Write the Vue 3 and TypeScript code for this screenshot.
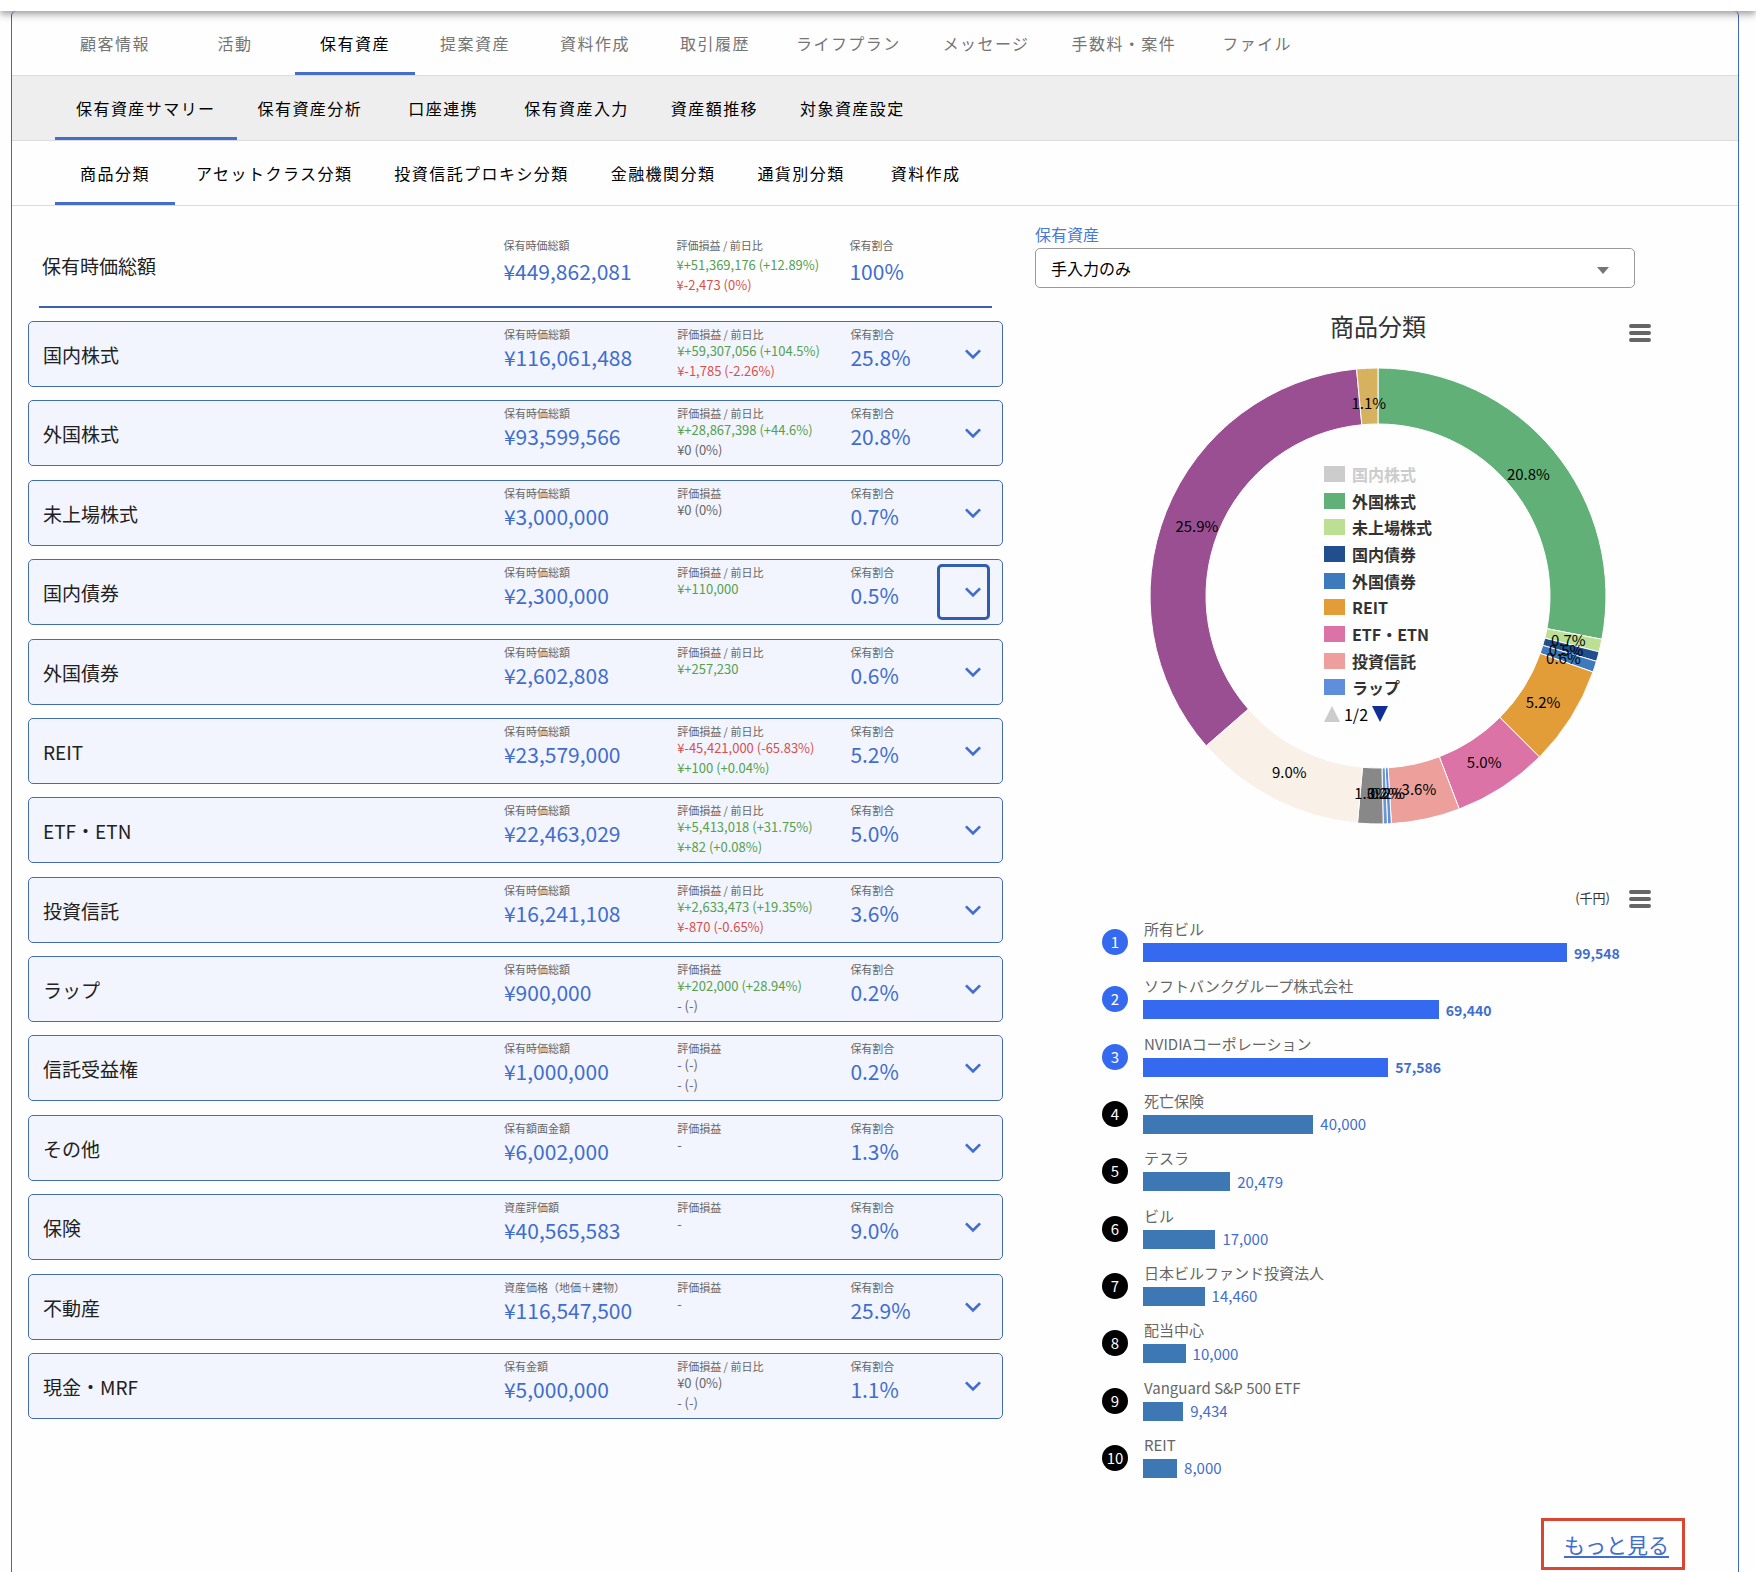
<script setup lang="ts">
import { computed, ref } from 'vue'

type Tone = 'up' | 'down' | 'flat'
interface Gain { text: string; tone: Tone }
interface Asset {
  name: string
  amountLabel: string
  amount: string
  gainLabel: string
  gains: Gain[]
  ratio: string
}
interface Slice { label: string; value: number; percent: string; color: string }

const up = (text: string): Gain => ({ text, tone: 'up' })
const down = (text: string): Gain => ({ text, tone: 'down' })
const flat = (text: string): Gain => ({ text, tone: 'flat' })

const BOTH = '評価損益 / 前日比'
const ONE = '評価損益'
const TOTAL = '保有時価総額'

const mainTabs = ['顧客情報', '活動', '保有資産', '提案資産', '資料作成', '取引履歴', 'ライフプラン', 'メッセージ', '手数料・案件', 'ファイル']
const subTabs = ['保有資産サマリー', '保有資産分析', '口座連携', '保有資産入力', '資産額推移', '対象資産設定']
const viewTabs = ['商品分類', 'アセットクラス分類', '投資信託プロキシ分類', '金融機関分類', '通貨別分類', '資料作成']

const mainTab = ref('保有資産')
const subTab = ref('保有資産サマリー')
const viewTab = ref('商品分類')
const focused = ref('国内債券')
const source = ref('手入力のみ')

const assets: Asset[] = [
  { name: '国内株式', amountLabel: TOTAL, amount: '¥116,061,488', gainLabel: BOTH, gains: [up('¥+59,307,056 (+104.5%)'), down('¥-1,785 (-2.26%)')], ratio: '25.8%' },
  { name: '外国株式', amountLabel: TOTAL, amount: '¥93,599,566', gainLabel: BOTH, gains: [up('¥+28,867,398 (+44.6%)'), flat('¥0 (0%)')], ratio: '20.8%' },
  { name: '未上場株式', amountLabel: TOTAL, amount: '¥3,000,000', gainLabel: ONE, gains: [flat('¥0 (0%)')], ratio: '0.7%' },
  { name: '国内債券', amountLabel: TOTAL, amount: '¥2,300,000', gainLabel: BOTH, gains: [up('¥+110,000')], ratio: '0.5%' },
  { name: '外国債券', amountLabel: TOTAL, amount: '¥2,602,808', gainLabel: BOTH, gains: [up('¥+257,230')], ratio: '0.6%' },
  { name: 'REIT', amountLabel: TOTAL, amount: '¥23,579,000', gainLabel: BOTH, gains: [down('¥-45,421,000 (-65.83%)'), up('¥+100 (+0.04%)')], ratio: '5.2%' },
  { name: 'ETF・ETN', amountLabel: TOTAL, amount: '¥22,463,029', gainLabel: BOTH, gains: [up('¥+5,413,018 (+31.75%)'), up('¥+82 (+0.08%)')], ratio: '5.0%' },
  { name: '投資信託', amountLabel: TOTAL, amount: '¥16,241,108', gainLabel: BOTH, gains: [up('¥+2,633,473 (+19.35%)'), down('¥-870 (-0.65%)')], ratio: '3.6%' },
  { name: 'ラップ', amountLabel: TOTAL, amount: '¥900,000', gainLabel: ONE, gains: [up('¥+202,000 (+28.94%)'), flat('- (-)')], ratio: '0.2%' },
  { name: '信託受益権', amountLabel: TOTAL, amount: '¥1,000,000', gainLabel: ONE, gains: [flat('- (-)'), flat('- (-)')], ratio: '0.2%' },
  { name: 'その他', amountLabel: '保有額面金額', amount: '¥6,002,000', gainLabel: ONE, gains: [flat('-')], ratio: '1.3%' },
  { name: '保険', amountLabel: '資産評価額', amount: '¥40,565,583', gainLabel: ONE, gains: [flat('-')], ratio: '9.0%' },
  { name: '不動産', amountLabel: '資産価格（地価＋建物）', amount: '¥116,547,500', gainLabel: ONE, gains: [flat('-')], ratio: '25.9%' },
  { name: '現金・MRF', amountLabel: '保有金額', amount: '¥5,000,000', gainLabel: BOTH, gains: [flat('¥0 (0%)'), flat('- (-)')], ratio: '1.1%' },
]

const slices: Slice[] = [
  { label: '外国株式', value: 93599566, percent: '20.8%', color: '#61b077' },
  { label: '未上場株式', value: 3000000, percent: '0.7%', color: '#bcdf93' },
  { label: '国内債券', value: 2300000, percent: '0.5%', color: '#214e8c' },
  { label: '外国債券', value: 2602808, percent: '0.6%', color: '#3c7abd' },
  { label: 'REIT', value: 23579000, percent: '5.2%', color: '#e39d38' },
  { label: 'ETF・ETN', value: 22463029, percent: '5.0%', color: '#db73a6' },
  { label: '投資信託', value: 16241108, percent: '3.6%', color: '#ec9f9b' },
  { label: 'ラップ', value: 900000, percent: '0.2%', color: '#5f8fdb' },
  { label: '信託受益権', value: 1000000, percent: '0.2%', color: '#6f96cf' },
  { label: 'その他', value: 6002000, percent: '1.3%', color: '#888888' },
  { label: '保険', value: 40565583, percent: '9.0%', color: '#f9f0e7' },
  { label: '不動産', value: 116547500, percent: '25.9%', color: '#994f91' },
  { label: '現金・MRF', value: 5000000, percent: '1.1%', color: '#d6b25f' },
]

const legend = [{ label: '国内株式', color: '#cccccc', off: true }, ...slices.slice(0, 8).map(s => ({ label: s.label, color: s.color, off: false }))]

const OUTER = 228
const INNER = 172
const LABEL = 195

const arcs = computed(() => {
  const sum = slices.reduce((t, s) => t + s.value, 0)
  const at = (r: number, a: number) => [Math.sin(a) * r, -Math.cos(a) * r].map(n => n.toFixed(2)).join(' ')
  let angle = 0
  return slices.map(s => {
    const start = angle
    const end = (angle += (s.value / sum) * Math.PI * 2)
    const large = end - start > Math.PI ? 1 : 0
    const mid = (start + end) / 2
    return {
      ...s,
      path: `M${at(OUTER, start)}A${OUTER} ${OUTER} 0 ${large} 1 ${at(OUTER, end)}L${at(INNER, end)}A${INNER} ${INNER} 0 ${large} 0 ${at(INNER, start)}Z`,
      x: Math.sin(mid) * LABEL,
      y: -Math.cos(mid) * LABEL + 8,
    }
  })
})

const ranking = [
  { name: '所有ビル', value: 99548 },
  { name: 'ソフトバンクグループ株式会社', value: 69440 },
  { name: 'NVIDIAコーポレーション', value: 57586 },
  { name: '死亡保険', value: 40000 },
  { name: 'テスラ', value: 20479 },
  { name: 'ビル', value: 17000 },
  { name: '日本ビルファンド投資法人', value: 14460 },
  { name: '配当中心', value: 10000 },
  { name: 'Vanguard S&P 500 ETF', value: 9434 },
  { name: 'REIT', value: 8000 },
]
const barWidth = (value: number) => `${((value / 99548) * 100).toFixed(2)}%`
</script>

<template>
  <div class="page">
    <header class="appbar"></header>
    <main class="card">
      <nav class="tabs tabs-main">
        <button v-for="t in mainTabs" :key="t" type="button" :class="{ active: t === mainTab }" @click="mainTab = t">{{ t }}</button>
      </nav>
      <nav class="tabs tabs-sub">
        <button v-for="t in subTabs" :key="t" type="button" :class="{ active: t === subTab }" @click="subTab = t">{{ t }}</button>
      </nav>
      <nav class="tabs">
        <button v-for="t in viewTabs" :key="t" type="button" :class="{ active: t === viewTab }" @click="viewTab = t">{{ t }}</button>
      </nav>

      <div class="content">
        <section class="holdings">
          <div class="cols total">
            <h2 class="name">保有時価総額</h2>
            <div class="cell">
              <span class="label">保有時価総額</span>
              <span class="value">¥449,862,081</span>
            </div>
            <div class="cell">
              <span class="label">評価損益 / 前日比</span>
              <span class="gain up">¥+51,369,176 (+12.89%)</span>
              <span class="gain down">¥-2,473 (0%)</span>
            </div>
            <div class="cell">
              <span class="label">保有割合</span>
              <span class="value">100%</span>
            </div>
          </div>

          <ul class="assets">
            <li v-for="a in assets" :key="a.name" class="cols asset">
              <h3 class="name">{{ a.name }}</h3>
              <div class="cell">
                <span class="label">{{ a.amountLabel }}</span>
                <span class="value">{{ a.amount }}</span>
              </div>
              <div class="cell">
                <span class="label">{{ a.gainLabel }}</span>
                <span v-for="(g, i) in a.gains" :key="i" class="gain" :class="g.tone">{{ g.text }}</span>
              </div>
              <div class="cell">
                <span class="label">保有割合</span>
                <span class="value">{{ a.ratio }}</span>
              </div>
              <button type="button" class="expand" :class="{ focused: a.name === focused }" :aria-label="a.name" @click="focused = a.name">
                <svg viewBox="0 0 24 24" width="32" height="32"><path fill="currentColor" d="M7.41 8.58 12 13.17l4.59-4.59L18 10l-6 6-6-6z" /></svg>
              </button>
            </li>
          </ul>
        </section>

        <section class="charts">
          <label class="source-label" for="source">保有資産</label>
          <div class="source">
            <select id="source" v-model="source">
              <option>手入力のみ</option>
            </select>
            <svg class="caret" viewBox="0 0 12 7" width="12" height="7"><path fill="#757575" d="M0 0h12L6 7z" /></svg>
          </div>

          <div class="chart">
            <div class="chart-head">
              <h2>商品分類</h2>
              <button type="button" class="menu" aria-label="メニュー">
                <svg viewBox="0 0 24 24" width="24" height="24"><path stroke="#666" stroke-width="4" stroke-linecap="round" d="M3 6h18M3 13h18M3 20h18" /></svg>
              </button>
            </div>
            <div class="donut">
              <svg viewBox="-229 -229 458 458" width="458" height="458">
                <path v-for="s in arcs" :key="s.label" :d="s.path" :fill="s.color" stroke="#fff" stroke-width="1" />
                <text v-for="s in arcs" :key="s.label" :x="s.x" :y="s.y" text-anchor="middle">{{ s.percent }}</text>
              </svg>
              <ul class="legend">
                <li v-for="l in legend" :key="l.label" :class="{ off: l.off }">
                  <i :style="{ background: l.color }"></i>{{ l.label }}
                </li>
                <li class="pager">
                  <button type="button" aria-label="前へ" disabled><svg viewBox="0 0 16 16" width="16" height="16"><path fill="#ccc" d="M8 0l8 16H0z" /></svg></button>
                  <span>1/2</span>
                  <button type="button" aria-label="次へ"><svg viewBox="0 0 16 16" width="16" height="16"><path fill="#112f94" d="M0 0h16L8 16z" /></svg></button>
                </li>
              </ul>
            </div>
          </div>

          <div class="chart">
            <div class="unit">
              <span>(千円)</span>
              <button type="button" class="menu" aria-label="メニュー">
                <svg viewBox="0 0 24 24" width="24" height="24"><path stroke="#666" stroke-width="4" stroke-linecap="round" d="M3 6h18M3 13h18M3 20h18" /></svg>
              </button>
            </div>
            <ol class="ranking">
              <li v-for="(r, i) in ranking" :key="r.name" :class="{ top: i < 3 }">
                <span class="rank">{{ i + 1 }}</span>
                <div class="entry">
                  <span class="entry-name">{{ r.name }}</span>
                  <div class="track">
                    <div class="bar" :style="{ width: barWidth(r.value) }"></div>
                    <span class="amount">{{ r.value.toLocaleString('en-US') }}</span>
                  </div>
                </div>
              </li>
            </ol>
          </div>

          <div class="more"><a href="#">もっと見る</a></div>
        </section>
      </div>
    </main>
  </div>
</template>

<style>
body {
  margin: 0;
  background: #fefefe;
}
</style>

<style scoped>
.page {
  min-height: 100vh;
  display: flex;
  flex-direction: column;
  font-family: "Noto Sans CJK JP", "Noto Sans", sans-serif;
  color: #212121;
}
.page * {
  box-sizing: border-box;
}
button {
  font: inherit;
  color: inherit;
  background: none;
  border: 0;
  padding: 0;
  cursor: pointer;
}
h2,
h3,
ul,
ol {
  margin: 0;
  padding: 0;
  font-weight: 400;
  list-style: none;
}
.appbar {
  height: 11px;
  background: #fff;
  position: relative;
  z-index: 1;
  box-shadow: 0 3px 5px -1px rgba(0, 0, 0, 0.2), 0 5px 7px rgba(0, 0, 0, 0.14), 0 1px 13px rgba(0, 0, 0, 0.12);
}
.card {
  flex: 1;
  margin: 0 17px 0 11px;
  border: 1px solid #4068b4;
  border-width: 0 1px;
  border-radius: 5px 5px 0 0;
}

.tabs {
  display: flex;
  height: 65px;
  padding-left: 43px;
  border-bottom: 1px solid #dcdcdc;
  color: #000;
}
.tabs button {
  min-width: 120px;
  padding: 0 21px;
  border-top: 3px solid transparent;
  border-bottom: 3px solid transparent;
  font-size: 16px;
  letter-spacing: 0.09em;
  white-space: nowrap;
}
.tabs button.active {
  border-bottom-color: #456dcb;
  color: #000;
}
.tabs-main button {
  color: #757575;
}
.tabs-sub {
  background: #eee;
}

.content {
  display: grid;
  grid-template-columns: 3fr 2fr;
  gap: 32px;
  padding: 0 53px 2px 16px;
}
.holdings {
  display: flex;
  flex-direction: column;
  padding-bottom: 151px;
}
.cols {
  display: grid;
  grid-template-columns: 16fr 6fr 6fr 3fr 53px;
  white-space: nowrap;
}
.total {
  margin: 0 11px 13px;
  padding: 31px 3px 11px;
  border-bottom: 2px solid #3c60ad;
}
.name {
  align-self: center;
  font-size: 19px;
  line-height: 28px;
}
.asset .name {
  padding: 2px 0 0 1px;
}
.cell {
  display: flex;
  flex-direction: column;
  min-width: 0;
  padding-top: 1px;
}
.label {
  font-size: 11px;
  line-height: 14px;
  color: #666;
}
.total .label {
  margin-bottom: 3px;
}
.value {
  font-size: 21px;
  line-height: 32px;
  color: #416dce;
}
.gain {
  font-size: 13px;
  line-height: 20px;
}
.up {
  color: #55a04d;
}
.down {
  color: #d9504b;
}
.flat {
  color: #666;
}
.assets {
  flex: 1;
  display: flex;
  flex-direction: column;
  justify-content: space-between;
}
.asset {
  height: 66px;
  padding: 4px 12px 4px 13px;
  border: 1px solid #436daf;
  border-radius: 5px;
  background: #f2f5fe;
}
.expand {
  display: flex;
  align-items: center;
  justify-content: flex-end;
  padding-right: 1px;
  border-radius: 5px;
  color: #416dce;
}
.expand.focused {
  outline: 3px solid #305dad;
  outline-offset: -3px;
}

.charts {
  display: flex;
  flex-direction: column;
}
.source-label {
  margin-top: 18px;
  margin-bottom: 4px;
  font-size: 16px;
  line-height: 20px;
  color: #4a78d6;
}
.source {
  position: relative;
  max-width: 600px;
}
.source select {
  display: block;
  width: 100%;
  height: 40px;
  padding: 0 15px;
  border: 1px solid #999;
  border-radius: 5px;
  background: #fff;
  appearance: none;
  font: inherit;
  font-size: 16px;
  color: #000;
}
.caret {
  position: absolute;
  right: 26px;
  top: 19px;
  pointer-events: none;
}
.chart {
  margin: 20px 31px 0 67px;
}
.chart + .chart {
  margin-top: 61px;
}
.chart-head {
  display: grid;
  grid-template-columns: 1fr auto 1fr;
}
.chart-head h2 {
  grid-column: 2;
  font-size: 24px;
  line-height: 36px;
  color: #333;
}
.menu {
  display: flex;
  align-self: end;
  justify-self: end;
  margin-right: 2px;
}
.donut {
  display: grid;
  place-items: center;
  margin-top: 23px;
}
.donut > * {
  grid-area: 1 / 1;
}
.donut > svg {
  display: block;
}
.donut text {
  font-size: 15px;
  fill: #000;
}
.legend {
  display: flex;
  flex-direction: column;
  justify-content: space-between;
  height: 270px;
  padding-bottom: 4px;
  font-size: 16px;
  line-height: 26px;
  color: #333;
  font-weight: 700;
}
.legend li {
  display: flex;
  align-items: center;
  gap: 7px;
}
.legend i {
  width: 21px;
  height: 16px;
}
.legend .off {
  color: #ccc;
}
.legend .pager {
  gap: 4px;
  color: #000;
  font-weight: 400;
}
.pager button {
  display: flex;
}

.unit {
  display: flex;
  align-items: center;
  justify-content: flex-end;
  gap: 18px;
  font-size: 13px;
  line-height: 24px;
  color: #333;
}
.ranking {
  display: flex;
  flex-direction: column;
  justify-content: space-between;
  height: 560px;
  margin-top: 8px;
}
.ranking li {
  display: flex;
  align-items: center;
  gap: 15px;
}
.rank {
  flex: none;
  width: 26px;
  margin-top: 4px;
  border-radius: 13px;
  background: #000;
  color: #fff;
  font-size: 15px;
  line-height: 26px;
  text-align: center;
}
.entry {
  flex: 1;
  padding-right: 87px;
}
.entry-name {
  display: block;
  margin-bottom: 3px;
  padding-left: 1px;
  font-size: 15px;
  line-height: 22px;
  color: #666;
}
.track {
  display: flex;
  align-items: center;
  gap: 7px;
  height: 19px;
}
.bar {
  flex: none;
  height: 19px;
  background: #3d78b4;
}
.amount {
  font-size: 15px;
  line-height: 18px;
  color: #416dce;
}
.top .rank,
.top .bar {
  background: #356af0;
}
.top .amount {
  font-size: 14px;
  font-weight: 700;
}

.more {
  align-self: flex-end;
  margin-top: 40px;
  padding: 7px 13px 7px 20px;
  border: 3px solid #d94631;
}
.more a {
  display: block;
  font-size: 21px;
  line-height: 32px;
  color: #416dce;
  text-decoration: underline;
  text-decoration-thickness: 2px;
  text-underline-offset: 3px;
}
</style>
